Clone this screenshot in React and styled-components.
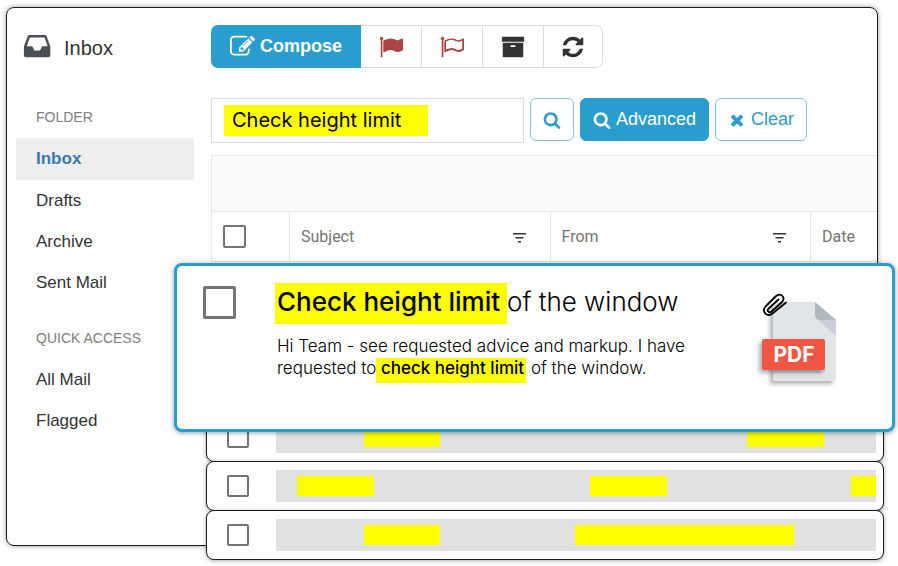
import React, { useState } from 'react';
import styled, { createGlobalStyle, css } from 'styled-components';

const BLUE = '#2a9dcf';
const YELLOW = '#ffff00';

const icons = {
  edit: 'M888 1184l116-116-152-152-116 116v56h96v96h56zm440-720q-16-16-33 1l-350 350q-17 17-1 33t33-1l350-350q17-17 1-33zm80 594v190q0 119-84.5 203.5t-203.5 84.5h-832q-119 0-203.5-84.5t-84.5-203.5v-832q0-119 84.5-203.5t203.5-84.5h832q63 0 117 25 15 7 18 23 3 17-9 29l-49 49q-14 14-32 8-23-6-45-6h-832q-66 0-113 47t-47 113v832q0 66 47 113t113 47h832q66 0 113-47t47-113v-126q0-13 9-22l64-64q15-15 35-7t20 29zm-96-738l288 288-672 672h-288v-288zm444 132l-92 92-288-288 92-92q28-28 68-28t68 28l152 152q28 28 28 68t-28 68z',
  flag: 'M320 256q0 72-64 110v1266q0 13-9.5 22.5t-22.5 9.5h-64q-13 0-22.5-9.5t-9.5-22.5v-1266q-64-38-64-110 0-53 37.5-90.5t90.5-37.5 90.5 37.5 37.5 90.5zm1472 64v763q0 25-12.5 38.5t-39.5 27.5q-215 116-369 116-61 0-123.5-22t-108.5-48-115.5-48-142.5-22q-192 0-464 146-17 9-33 9-26 0-45-19t-19-45v-742q0-32 31-55 21-14 79-43 236-120 421-120 107 0 200 29t219 88q38 19 88 19 54 0 117.5-21t110-47 88-47 54.5-21q26 0 45 19t19 45z',
  flagOutline: 'M1664 1024v-616q-169 91-306 91-82 0-145-32-100-49-184-76.5t-178-27.5q-173 0-403 127v599q245-113 433-113 55 0 103.5 7.5t98 26 77 31 82.5 39.5l28 14q44 22 101 22 120 0 293-92zm-1344-768q0 35-17.5 64t-46.5 46v1266q0 14-9 23t-23 9h-64q-14 0-23-9t-9-23v-1266q-29-17-46.5-46t-17.5-64q0-53 37.5-90.5t90.5-37.5 90.5 37.5 37.5 90.5zm1472 64v763q0 39-35 57-10 5-17 9-218 116-369 116-88 0-158-35l-28-14q-64-33-99-48t-91-29-114-14q-102 0-235.5 44t-228.5 102q-15 9-33 9-16 0-32-8-32-19-32-56v-742q0-35 31-55 35-21 78.5-42.5t114-52 152.5-49.5 155-19q112 0 209 31t209 86q38 19 89 19 122 0 310-112 22-12 31-17 31-16 62 2 31 20 31 55z',
  archive: 'M1088 832q0-26-19-45t-45-19h-256q-26 0-45 19t-19 45 19 45 45 19h256q26 0 45-19t19-45zm576-192v960q0 26-19 45t-45 19h-1408q-26 0-45-19t-19-45v-960q0-26 19-45t45-19h1408q26 0 45 19t19 45zm64-448v256q0 26-19 45t-45 19h-1536q-26 0-45-19t-19-45v-256q0-26 19-45t45-19h1536q26 0 45 19t19 45z',
  refresh: 'M1639 1056q0 5-1 7-64 268-268 434.5t-478 166.5q-146 0-282.5-55t-243.5-157l-129 129q-19 19-45 19t-45-19-19-45v-448q0-26 19-45t45-19h448q26 0 45 19t19 45-19 45l-137 137q71 66 161 102t187 36q134 0 250-65t186-179q11-17 53-117 8-23 30-23h192q13 0 22.5 9.5t9.5 22.5zm25-800v448q0 26-19 45t-45 19h-448q-26 0-45-19t-19-45 19-45l138-138q-148-137-349-137-134 0-250 65t-186 179q-11 17-53 117-8 23-30 23h-199q-13 0-22.5-9.5t-9.5-22.5v-7q65-268 270-434.5t480-166.5q146 0 284 55.5t245 156.5l130-129q19-19 45-19t45 19 19 45z',
  search: 'M1216 832q0-185-131.5-316.5t-316.5-131.5-316.5 131.5-131.5 316.5 131.5 316.5 316.5 131.5 316.5-131.5 131.5-316.5zm512 832q0 52-38 90t-90 38q-54 0-90-38l-343-342q-179 124-399 124-143 0-273.5-55.5t-225-150-150-225-55.5-273.5 55.5-273.5 150-225 225-150 273.5-55.5 273.5 55.5 225 150 150 225 55.5 273.5q0 220-124 399l343 343q37 37 37 90z',
  times: 'M1490 1322q0 40-28 68l-136 136q-28 28-68 28t-68-28l-294-294-294 294q-28 28-68 28t-68-28l-136-136q-28-28-28-68t28-68l294-294-294-294q-28-28-28-68t28-68l136-136q28-28 68-28t68 28l294 294 294-294q28-28 68-28t68 28l136 136q28 28 28 68t-28 68l-294 294 294 294q28 28 28 68z',
};

const Icon = ({ name, size }) => (
  <svg width={size} height={size} viewBox="0 0 1792 1792" fill="currentColor" aria-hidden="true">
    <path d={icons[name]} />
  </svg>
);

const InboxIcon = () => (
  <svg width="28" height="26" viewBox="0 0 28 26" aria-hidden="true">
    <path
      fill="#4b4f57"
      fillRule="evenodd"
      d="M6.500 0h15.300q1.300 0 1.800 1.200L27 10.500q.3.700.3 1.500v8.300q0 1.900-1.800 1.900H2.700q-1.800 0-1.800-1.900V12q0-.8.3-1.500L4.700 1.200Q5.200 0 6.500 0zM6.800 2.500L3.800 11.300h5.400l2.200 4.300h5.600l2.200-4.300h5.400L21.500 2.500z"
    />
  </svg>
);

const FilterIcon = () => (
  <svg width="13" height="14" viewBox="0 0 13 14" fill="#333" aria-hidden="true">
    <path d="M0 3h13v1.500H0zM2.500 7h8v1.500h-8zM5 11h3v1.500H5z" />
  </svg>
);

const PdfIcon = () => (
  <svg width="84" height="100" viewBox="0 0 84 100" role="img" aria-label="PDF attachment">
    <defs>
      <filter id="drop" x="-20%" y="-20%" width="140%" height="140%">
        <feDropShadow dx="-3" dy="3" stdDeviation="2" floodOpacity="0.3" />
      </filter>
    </defs>
    <g filter="url(#drop)">
      <path fill="#e1e5e8" d="M21 12h40l21 18v58q0 3-3 3H19V14q0-2 2-2z" />
    </g>
    <path fill="#c9d0da" d="M64 30h18v16z" />
    <path fill="#b0b7bf" d="M61 12l21 18H66q-5 0-5-5z" />
    <path fill="#c9d0da" d="M19 80h52v1q0 2-2 2H19z" />
    <g filter="url(#drop)">
      <rect x="8" y="49" width="63" height="31" rx="2" fill="#f15642" />
    </g>
    <text x="40" y="72" textAnchor="middle" fill="#fff" fontFamily="Inter, sans-serif" fontSize="21" fontWeight="700">
      PDF
    </text>
    <path
      fill="none"
      stroke="#000"
      strokeWidth="1.800"
      strokeLinecap="round"
      strokeLinejoin="round"
      d="M32 12.500L18.500 23.500c-5 4-11.500-1.500-7-7L21.500 6.500c5-4.500 10.500.5 6.500 5.500L17.500 21.500c-2.500 2-5-.5-3-2.800L24.500 9.500"
    />
  </svg>
);

const folders = ['Inbox', 'Drafts', 'Archive', 'Sent Mail'];
const quickAccess = ['All Mail', 'Flagged'];

// start is the space before a highlight, both values in % of the bar
const results = [
  [{ start: 14.6, width: 12.7 }, { start: 51.2, width: 12.8 }],
  [{ start: 3.5, width: 12.8 }, { start: 36, width: 12.8 }, { start: 30.7, width: 4.2 }],
  [{ start: 14.6, width: 12.7 }, { start: 22.6, width: 36.5 }],
];

const App = () => {
  const [query, setQuery] = useState('Check height limit');
  const [active, setActive] = useState('Inbox');

  const renderLinks = (names) => {
    return names.map((name) => (
      <li key={name}>
        <NavLink href="#" $active={name === active} onClick={() => setActive(name)}>
          {name}
        </NavLink>
      </li>
    ));
  };

  return (
    <Page>
      <GlobalStyle />
      <Window>
        <Sidebar>
          <Title>
            <InboxIcon />
            Inbox
          </Title>
          <NavHeading>FOLDER</NavHeading>
          <NavList>{renderLinks(folders)}</NavList>
          <NavHeading $spaced>QUICK ACCESS</NavHeading>
          <NavList>{renderLinks(quickAccess)}</NavList>
        </Sidebar>

        <Main>
          <Toolbar>
            <ComposeButton>
              <Icon name="edit" size={25} />
              Compose
            </ComposeButton>
            <ToolButton $color="#a94442" aria-label="Flag"><Icon name="flag" size={24} /></ToolButton>
            <ToolButton $color="#a94442" aria-label="Unflag"><Icon name="flagOutline" size={24} /></ToolButton>
            <ToolButton aria-label="Archive"><Icon name="archive" size={24} /></ToolButton>
            <ToolButton aria-label="Refresh"><Icon name="refresh" size={24} /></ToolButton>
          </Toolbar>

          <SearchRow>
            <SearchBox>
              <SearchInput
                aria-label="Search mail"
                value={query}
                onChange={(e) => setQuery(e.target.value)}
              />
            </SearchBox>
            <SearchButton aria-label="Search"><Icon name="search" size={18} /></SearchButton>
            <SearchButton $filled><Icon name="search" size={18} />Advanced</SearchButton>
            <SearchButton onClick={() => setQuery('')}><Icon name="times" size={18} />Clear</SearchButton>
          </SearchRow>

          <GridBar />
          <Table>
            <thead>
              <tr>
                <Th $width="78px"><Checkbox type="checkbox" aria-label="Select all" $size={23} /></Th>
                <Th><ThContent>Subject<FilterIcon /></ThContent></Th>
                <Th><ThContent>From<FilterIcon /></ThContent></Th>
                <Th $width="67px">Date</Th>
              </tr>
            </thead>
          </Table>

          <Card>
            <Checkbox type="checkbox" aria-label="Select message" $size={33} $thick />
            <Message>
              <Subject><SubjectMark>Check height limit </SubjectMark>of the window</Subject>
              <Preview>
                Hi Team - see requested advice and markup. I have
                requested to<Mark> check height limit</Mark> of the window.
              </Preview>
            </Message>
            <Attachment><PdfIcon /></Attachment>
          </Card>

          <Results>
            {results.map((marks, index) => (
              <Row key={index}>
                <Checkbox type="checkbox" aria-label={`Select result ${index + 1}`} $size={22} />
                <Bar>
                  {marks.map((mark, i) => (
                    <BarMark key={i} $start={mark.start} $width={mark.width} />
                  ))}
                </Bar>
              </Row>
            ))}
          </Results>
        </Main>
      </Window>
    </Page>
  );
};

export default App;

const GlobalStyle = createGlobalStyle`
  * {
    box-sizing: border-box;
  }
  body {
    margin: 0;
    background: #fff;
    font-family: 'Liberation Sans', Arial, sans-serif;
    color: #333;
  }
  button, input {
    font: inherit;
  }
`;

const Page = styled.div`
  padding: 7px 20px 20px 6px;
`;

const Window = styled.div`
  display: flex;
  border: 1px solid #1c1c1c;
  border-radius: 8px;
  box-shadow: 0 0 5px rgba(0, 0, 0, 0.4);
`;

const Sidebar = styled.nav`
  flex: 0 0 204px;
  padding: 27px 17px 0 9px;
`;

const Title = styled.h1`
  display: flex;
  align-items: center;
  gap: 13px;
  margin: 0 0 35px 7px;
  height: 26px;
  font-size: 20px;
  font-weight: 400;
`;

const NavHeading = styled.h2`
  margin: ${(props) => (props.$spaced ? '14px' : '0')} 0 0;
  padding-left: 20px;
  font-size: 14px;
  font-weight: 400;
  line-height: 42px;
  color: #808080;
`;

const NavList = styled.ul`
  margin: 0;
  padding: 0;
  list-style: none;
`;

const NavLink = styled.a`
  display: block;
  padding-left: 20px;
  font-size: 17px;
  line-height: 41px;
  color: #333;
  text-decoration: none;
  ${(props) => props.$active && css`
    background: #eee;
    color: #337ab7;
    font-weight: 700;
    line-height: 42px;
  `}
`;

const Main = styled.main`
  flex: 1;
  min-width: 0;
  padding-top: 17px;
`;

const Toolbar = styled.div`
  display: flex;
`;

const ToolButton = styled.button`
  display: flex;
  align-items: center;
  justify-content: center;
  width: 61px;
  height: 43px;
  padding: 0;
  border: 1px solid #ddd;
  border-left: none;
  background: #fff;
  color: ${(props) => props.$color || '#333'};
  cursor: pointer;
  &:last-child {
    width: 59px;
    border-radius: 0 7px 7px 0;
  }
`;

const ComposeButton = styled(ToolButton)`
  gap: 5px;
  width: 150px;
  border: none;
  border-radius: 7px 0 0 7px;
  background: ${BLUE};
  color: #fff;
  font-size: 18px;
  font-weight: 700;
`;

const SearchRow = styled.div`
  display: flex;
  align-items: flex-start;
  gap: 6px;
  margin: 30px 0 12px;
`;

const SearchBox = styled.div`
  width: 47%;
  padding: 6px 12px;
  border: 1px solid #ddd;
`;

const SearchInput = styled.input`
  display: block;
  width: 204px;
  max-width: 100%;
  height: 31px;
  padding: 0 8px 2px;
  border: none;
  background: ${YELLOW};
  color: #000;
  font-family: Inter, sans-serif;
  font-size: 20px;
  font-weight: 400;
`;

const SearchButton = styled.button`
  display: flex;
  align-items: center;
  gap: 5px;
  height: 43px;
  padding: 0 12px;
  border: 1px solid ${(props) => (props.$filled ? BLUE : '#7fc4e2')};
  border-radius: 6px;
  background: ${(props) => (props.$filled ? BLUE : '#fff')};
  color: ${(props) => (props.$filled ? '#fff' : BLUE)};
  font-size: 18px;
  cursor: pointer;
`;

const GridBar = styled.div`
  height: 57px;
  border: 1px solid #e6e6e6;
  border-right: none;
  background: #fafafa;
`;

const Table = styled.table`
  width: 100%;
  table-layout: fixed;
  border-collapse: separate;
  border-spacing: 0;
`;

const Th = styled.th`
  width: ${(props) => props.$width || 'auto'};
  height: 50px;
  padding: 0 11px;
  border-left: 1px solid #e6e6e6;
  border-bottom: 1px solid #e0e0e0;
  font-family: Roboto, sans-serif;
  font-size: 16px;
  font-weight: 400;
  text-align: left;
  color: #757575;
`;

const ThContent = styled.div`
  display: flex;
  align-items: center;
  justify-content: space-between;
  padding-right: 13px;
`;

const Checkbox = styled.input`
  appearance: none;
  display: block;
  flex: none;
  width: ${(props) => props.$size}px;
  height: ${(props) => props.$size}px;
  margin: 0;
  border: ${(props) => (props.$thick ? 3 : 2)}px solid #757575;
  border-radius: 2px;
  background: #fff;
  &:checked {
    background: ${BLUE};
  }
`;

const Card = styled.article`
  position: relative;
  z-index: 1;
  display: flex;
  align-items: flex-start;
  margin: 1px -18px 0 -37px;
  min-height: 169px;
  padding: 20px 54px 20px 26px;
  border: 3px solid ${BLUE};
  border-radius: 8px;
  background: #fff;
  box-shadow: 0 1px 5px rgba(0, 0, 0, 0.4);
`;

const Message = styled.div`
  flex: 1;
  min-width: 0;
  padding-left: 39px;
  font-family: Inter, sans-serif;
  color: #000;
`;

const Attachment = styled.div`
  padding-top: 4px;
`;

const Mark = styled.mark`
  padding: 0 2px 5px 0;
  background: ${YELLOW};
  color: #000;
  font-weight: 500;
`;

const SubjectMark = styled(Mark)`
  padding: 3px 0 7px 2px;
`;

const Subject = styled.h2`
  margin: 0 0 17px;
  font-size: 26px;
  font-weight: 300;
  line-height: 32px;
`;

const Preview = styled.p`
  max-width: 430px;
  margin: 0;
  padding-left: 2px;
  font-size: 17px;
  font-weight: 300;
  line-height: 22px;
`;

const Results = styled.div`
  margin: -20px -7px -15px -5px;
`;

const Row = styled.div`
  display: flex;
  align-items: center;
  height: 50px;
  margin-bottom: -1px;
  padding: 0 7px 0 20px;
  border: 1px solid #1c1c1c;
  border-radius: 8px;
  background: #fff;
  box-shadow: 0 1px 4px rgba(0, 0, 0, 0.35);
`;

const Bar = styled.div`
  display: flex;
  align-items: center;
  flex: 1;
  height: 32px;
  margin-left: 27px;
  background: #e1e1e1;
`;

const BarMark = styled.span`
  width: ${(props) => props.$width}%;
  height: 20px;
  margin-left: ${(props) => props.$start}%;
  background: ${YELLOW};
`;
